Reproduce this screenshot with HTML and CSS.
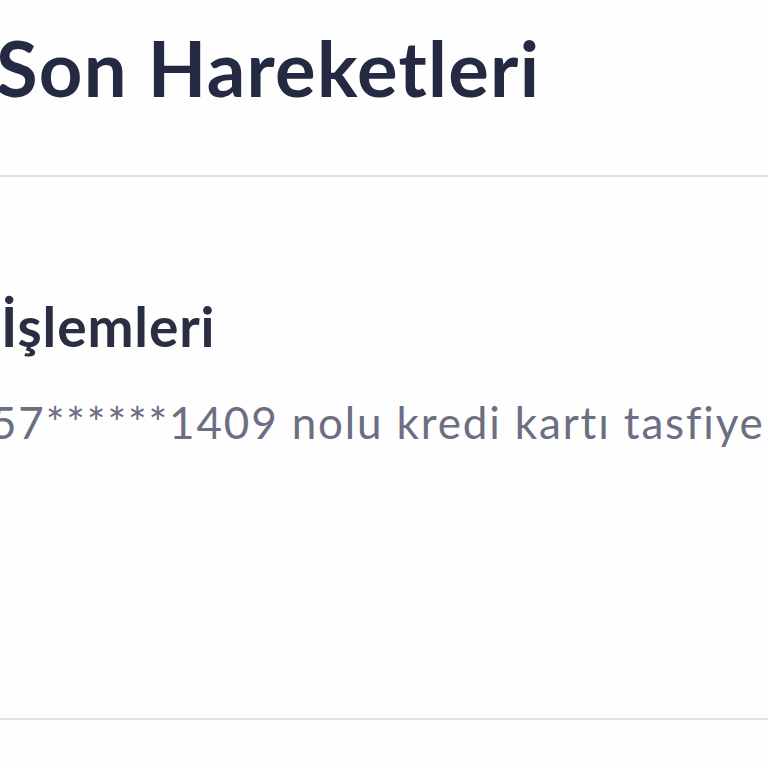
FILE: index.html
```html
<!DOCTYPE html>
<html lang="tr">
<head>
<meta charset="utf-8">
<link rel="stylesheet" href="styles.css">
</head>
<body>
<div class="page">
  <header class="head">
    <h1 class="title">Son Hareketleri</h1>
  </header>
  <section class="item">
    <h2 class="item-title">İşlemleri</h2>
    <p class="item-text">57******1409 nolu kredi kartı tasfiye</p>
  </section>
</div>
</body>
</html>
```
FILE: styles.css
```css
html, body {
  margin: 0;
  padding: 0;
  background: #fefefe;
  overflow: hidden;
}
.page {
  width: 768px;
  height: 768px;
  overflow: hidden;
  font-family: "Lato", "Noto Sans", sans-serif;
}
.head {
  height: 175px;
  border-bottom: 2px solid #dfdee8;
}
.title {
  margin: 0 0 0 -4px;
  padding-top: 22px;
  font-size: 76px;
  line-height: 92px;
  font-weight: 700;
  letter-spacing: 1.3px;
  color: #242a42;
  white-space: nowrap;
}
.item {
  height: 540px;
  border-bottom: 2px solid #e1e0ea;
  padding-top: 1px;
}
.item-title {
  margin: 115px 0 0 1px;
  font-size: 55px;
  line-height: 66px;
  font-weight: 700;
  letter-spacing: 0.9px;
  color: #2a2e42;
  white-space: nowrap;
}
.item-text {
  margin: 35px 0 0 -9px;
  font-size: 44px;
  line-height: 56px;
  font-weight: 400;
  letter-spacing: 1.85px;
  color: #6c6e82;
  white-space: nowrap;
}
```
